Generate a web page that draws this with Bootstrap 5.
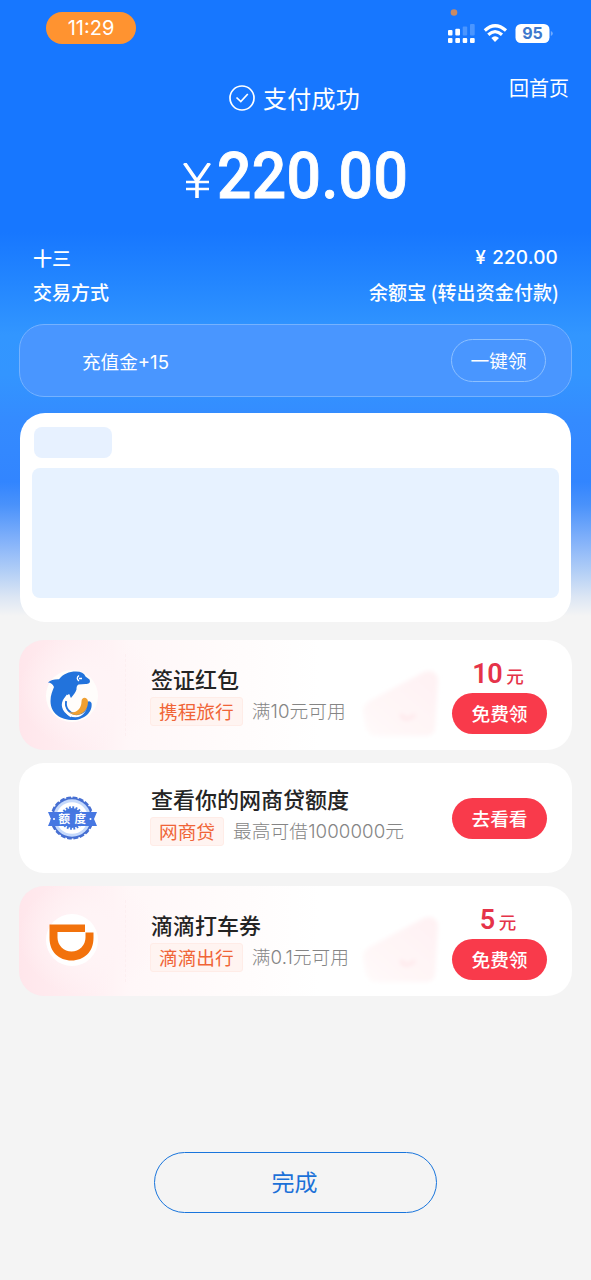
<!DOCTYPE html>
<html lang="zh-CN">
<head>
<meta charset="utf-8">
<meta name="viewport" content="width=device-width, initial-scale=1">
<title>支付成功</title>
<link href="https://cdn.jsdelivr.net/npm/bootstrap@5.3.0/dist/css/bootstrap.min.css" rel="stylesheet">
<style>
body{font-family:Inter,"Noto Sans CJK SC",sans-serif;background:#f4f4f4;min-height:1280px;overflow-x:hidden;
background-image:linear-gradient(180deg,#1777ff 0,#1777ff 232px,#2386ff 282px,#3296ff 335px,#3395ff 375px,#348bff 420px,#3285ff 482px,#4a92fb 505px,#82b1fa 540px,#b3cff6 572px,#dce6f4 597px,#f4f4f4 616px);background-repeat:no-repeat}
.cjk{font-family:"Noto Sans CJK SC",sans-serif}
.statusbar{height:64px;padding:12px 38px 0 46px}
.clock{width:90px;height:32px;background:#ff9330;font-size:20px;line-height:33px}
.headline{height:52px;padding-right:22px;display:grid;grid-template-columns:1fr auto 1fr}
.headline .done{font-size:24px;line-height:36px;padding-top:15px;gap:8px;letter-spacing:.3px;margin-left:20px}
.headline .home{font-size:20px;line-height:30px;padding-top:9px}
.amount{height:122px;font-family:Roboto,sans-serif;line-height:78px;padding-top:21px}
.amount .num{width:191px;font-size:65.5px;font-weight:500;letter-spacing:.4px;-webkit-text-stroke:.9px #fff;transform:scaleX(.925);transform-origin:0 50%}
.amount .cur{width:28px;height:35px;margin:26px 6px 0 0}
.detail{padding:5px 33px 0;height:86px;font-size:19px;font-weight:500;line-height:30px}
.detail .money{font-family:Inter,"Noto Sans CJK SC",sans-serif;letter-spacing:.15px}
.detail .money span{margin-right:1px}
.detail .line2{margin-top:4px;height:30px}
.method{letter-spacing:.1px;margin-right:-1px}
.coupon{margin:0 19px;height:73px;border:1px solid #75b2ff;border-radius:25px;background:#4996ff;padding:0 25px 0 62px;font-size:18.6px}
.pick{width:95px;height:43px;border:1px solid #8cc0ff;font-size:18.7px}
.panel{margin:16px 20px 18px;height:209px;border-radius:25px;padding:14px 12px}
.chip{width:78px;height:31px;margin-left:2px;border-radius:8px;background:#e7f1ff}
.blank{height:130px;margin-top:10px;border-radius:8px;background:#e7f2ff}
.offer{margin:0 19px;height:110px;border-radius:25px;background:#fff;padding:0 25px 0 29px}
.offer.pink{background:radial-gradient(ellipse 70px 60px at 70px 50px,#fff4f6 35%,transparent 100%),linear-gradient(90deg,#ffe6eb 0,#fff0f3 75px,#fff7f8 112px,#fffbfb 200px,#fff 300px)}
.next{margin-top:13px}
.dash{left:106px;top:14px;height:82px;border-left:1px dashed #fdeff1}
.art{left:340px;top:26px;width:92px;height:80px}
.logo{width:50px;height:50px;flex:none;overflow:visible}
.info{margin-left:52px}
.name{font-size:22px;line-height:32px;font-weight:500;color:#242424;position:relative;top:-3px;left:1px}
.tagrow{height:29px;gap:9px;font-size:18.7px;line-height:26px}
.note{font-family:Inter,"Noto Sans CJK SC",sans-serif;font-weight:300;line-height:30px;letter-spacing:.08px;color:#858585}
.taglabel{background:#fff4f1;border:1px solid #ffece7;border-radius:3px;padding:0 8px;color:#f06437}
.act{width:95px}
.price{color:#e53349;font-family:Roboto,"Noto Sans CJK SC",sans-serif;line-height:35px;height:32px;padding-right:3px}
.price b{font-size:27px;font-weight:600;letter-spacing:-.5px}
.price span{font-size:17.5px;font-weight:500;font-family:"Noto Sans CJK SC",sans-serif;margin-left:4px}
.go{height:41px;background:#f93a4b;font-size:18.7px;font-weight:500;padding-top:1px}
.finish{width:283px;height:61px;margin:156px auto 0;border:1.5px solid #1975dc;color:#1b71d8;font-size:23px;padding-right:14px;padding-top:4px}
</style>
<script src="https://cdn.jsdelivr.net/npm/bootstrap@5.3.0/dist/js/bootstrap.bundle.min.js"></script>
</head>
<body>
<header class="text-white">
  <div class="statusbar d-flex justify-content-between align-items-start">
    <div class="clock rounded-pill text-center">11:29</div>
    <svg width="106" height="38" viewBox="447 12 106 38" style="margin-top:-4px">
      <circle cx="454" cy="16.500" r="3.300" fill="#c98a63"/>
      <g fill="#fff"><rect x="448" y="34" width="4.500" height="5.500" rx="1"/><rect x="455.300" y="32.800" width="4.700" height="6.700" rx="1"/>
      <rect x="448" y="42" width="4.500" height="5" rx="1"/><rect x="455.300" y="42" width="4.700" height="5" rx="1"/><rect x="462.700" y="42" width="4.500" height="5" rx="1"/><rect x="470" y="42" width="4.700" height="5" rx="1"/></g>
      <g fill="#4b96ff"><rect x="462.700" y="30.500" width="4.500" height="9" rx="1"/><rect x="470" y="28" width="4.700" height="11.500" rx="1"/></g>
      <g fill="none" stroke="#fff" stroke-width="3.200"><path d="M484.800 34.500Q495 25 506 34.500"/><path d="M488.300 38.700Q495 32.600 502 38.700"/></g>
      <path d="M491.300 42Q495 38.300 499 42L495 46z" fill="#fff"/>
      <rect x="515.500" y="28" width="34" height="19" rx="5.500" fill="#fff"/><path d="M550.800 35v5q2-.6 2-2.500t-2-2.500" fill="#70abff"/>
      <text x="532.500" y="43.300" text-anchor="middle" font-family="Inter" font-size="16" font-weight="700" fill="#3c78cd">95</text>
    </svg>
  </div>
  <div class="headline cjk">
    <span></span>
    <div class="done d-flex align-items-center"><svg width="26" height="26" viewBox="0 0 26 26" fill="none" stroke="#fff" stroke-width="1.700"><circle cx="13" cy="13" r="12"/><path d="M7.500 12.500l4.300 4 7-7.500"/></svg><span>支付成功</span></div>
    <div class="home text-end">回首页</div>
  </div>
  <div class="amount d-flex justify-content-center align-items-start">
    <svg class="cur" viewBox="0 0 28 35" fill="none" stroke="#fff"><path d="M1.500 0l12.500 18L26.500 0M14 18v17" stroke-width="3.600"/><path d="M3 19h23M3 26h23" stroke-width="2.600"/></svg>
    <span class="num">220.00</span>
  </div>
  <div class="detail cjk">
    <div class="d-flex justify-content-between"><span>十三</span><span class="money"><span>¥</span> 220.00</span></div>
    <div class="line2 d-flex justify-content-between"><span>交易方式</span><span class="method">余额宝 (转出资金付款)</span></div>
  </div>
</header>
<main>
  <section class="coupon d-flex align-items-center justify-content-between text-white"><span class="pt-1">充值金+15</span><div class="pick rounded-pill d-flex align-items-center justify-content-center cjk">一键领</div></section>
  <section class="panel bg-white"><div class="chip"></div><div class="blank"></div></section>

  <section class="offer pink position-relative d-flex align-items-center">
    <span class="dash position-absolute"></span>
    <svg class="art position-absolute" viewBox="0 0 92 80"><defs><linearGradient id="pk" x1="0" y1="1" x2="1" y2="0"><stop offset="0" stop-color="#fffafa"/><stop offset=".5" stop-color="#fff5f6"/><stop offset="1" stop-color="#fff1f3"/></linearGradient><filter id="soft"><feGaussianBlur stdDeviation="2.200"/></filter></defs><g filter="url(#soft)"><path d="M12 34L65 6q11-4 14 7l-3 49q0 8-12 8H18Q8 70 6 57L4 45q0-7 8-11" fill="url(#pk)"/><path d="M42 48q3 9 14 1" fill="none" stroke="#ffe9ec" stroke-width="4"/></g></svg>
    <svg class="logo" viewBox="0 0 50 50"><circle cx="24" cy="26" r="26" fill="#fffdfb"/>
      <path d="M0 12.500Q4 9 11 9.300C15 4 21 1.500 28 1.500q7.500 0 9.500 5l4 3c1.500 3.500-1 4.500-4 4.500l-7 .5c-2 1-2 3-2 5-1 3.500-3 5-5.500 8.500-1-1.500-1-3-2-4C13 29 12 36 16.500 42c6 7 16 7 20.500 0 2-3 2-6 2-10q3-2 4.500 1C45 42 36 50 25.500 50 12 50 2.500 43 2.500 31c0-6 2-10 3.500-14Q4 12.500 0 12.500z" fill="#2273dc"/>
      <path d="M18 31c-1 7 3 12 9 13 7 1 12-4 12-11" fill="none" stroke="#2273dc" stroke-width="2"/>
      <path d="M33.500 31.500c0-5 6-5 6.500 0 0 8-5 13.500-12 13.500-3 0-5-1-7-3 6 2 12.500-2.500 12.500-10.500z" fill="#efa032"/>
      <path d="M19.500 25C14 32 15 41 23 46.500" stroke="#fff" stroke-width="1.600" fill="none"/><path d="M31 5.500q-3.500 2.700 0 5.500M31 8.500h3" fill="none" stroke="#fff" stroke-width="1.300"/></svg>
    <div class="info cjk"><div class="name">签证红包</div><div class="tagrow d-flex"><span class="taglabel">携程旅行</span><span class="note">满10元可用</span></div></div>
    <div class="act ms-auto text-center"><div class="price"><b>10</b><span>元</span></div><div class="go rounded-pill text-white d-flex align-items-center justify-content-center cjk mt-1">免费领</div></div>
  </section>

  <section class="offer next d-flex align-items-center">
    <svg class="logo" viewBox="0 0 50 50">
      <g fill="#466fd2"><circle cx="24" cy="25" r="20.500"/><circle cx="24" cy="25" r="20.300" fill="none" stroke="#466fd2" stroke-width="2.600" stroke-dasharray="4.700 1.680"/></g>
      <circle cx="24" cy="25" r="18.800" fill="#c5d9fb"/><circle cx="24" cy="25" r="15.800" fill="#fff"/><circle cx="24" cy="25" r="10" fill="#4377df"/><circle cx="24" cy="25" r="10.500" fill="none" stroke="#4377df" stroke-width="2.500" stroke-dasharray="1.800 1.500"/>
      <path d="M0 19h49l-3 7 3 7H0l3-7z" fill="#4677e2"/><g fill="#fff"><circle cx="6" cy="26" r="1"/><circle cx="42.500" cy="26" r="1"/></g>
      <text x="10.500" y="30.200" font-family="Noto Sans CJK SC" font-weight="700" font-size="11.500" fill="#fff">额</text><text x="26.500" y="30.200" font-family="Noto Sans CJK SC" font-weight="700" font-size="11.500" fill="#fff">度</text></svg>
    <div class="info cjk" style="margin-top:-6px"><div class="name">查看你的网商贷额度</div><div class="tagrow d-flex"><span class="taglabel">网商贷</span><span class="note">最高可借1000000元</span></div></div>
    <div class="act ms-auto"><div class="go rounded-pill text-white d-flex align-items-center justify-content-center cjk">去看看</div></div>
  </section>

  <section class="offer pink next position-relative d-flex align-items-center">
    <span class="dash position-absolute"></span>
    <svg class="art position-absolute" viewBox="0 0 92 80"><g filter="url(#soft)"><path d="M12 34L65 6q11-4 14 7l-3 49q0 8-12 8H18Q8 70 6 57L4 45q0-7 8-11" fill="url(#pk)"/><path d="M42 48q3 9 14 1" fill="none" stroke="#ffe9ec" stroke-width="4"/></g></svg>
    <svg class="logo" viewBox="0 0 50 50"><circle cx="24" cy="24" r="26" fill="#fff"/><path d="M1.500 8.500H37V16H9.500V21.500a14 14 0 0 0 28 0V16.500H45.500V22C45.500 36 36 44.500 23.500 44.500S1.500 36 1.500 22z" fill="#f2720c"/></svg>
    <div class="info cjk"><div class="name">滴滴打车券</div><div class="tagrow d-flex"><span class="taglabel">滴滴出行</span><span class="note">满0.1元可用</span></div></div>
    <div class="act ms-auto text-center"><div class="price"><b>5</b><span>元</span></div><div class="go rounded-pill text-white d-flex align-items-center justify-content-center cjk mt-1">免费领</div></div>
  </section>
</main>
<footer><button type="button" class="finish btn rounded-pill d-flex align-items-center justify-content-center cjk">完成</button></footer>
</body>
</html>
